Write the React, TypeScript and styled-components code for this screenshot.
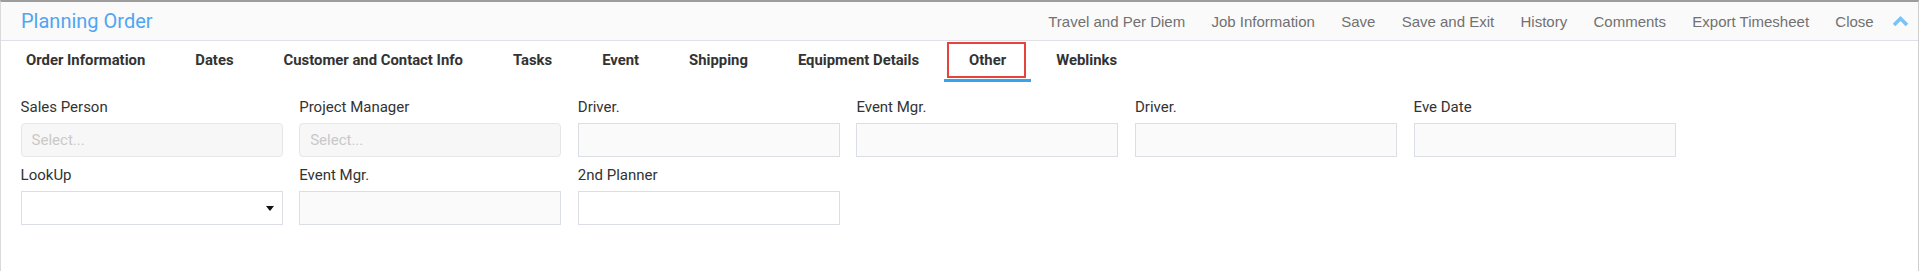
import * as React from "react";
import styled, { createGlobalStyle } from "styled-components";

const GlobalStyle = createGlobalStyle`
  html, body {
    margin: 0;
    padding: 0;
    background: #fff;
  }
  body {
    font-family: Roboto, "Liberation Sans", Arial, sans-serif;
  }
`;

const Panel = styled.div`
  box-sizing: border-box;
  width: 1919px;
  height: 271px;
  border-top: 2px solid #9d9d9d;
  border-left: 1px solid #dadada;
  border-right: 1px solid #cfcfcf;
  background: #fff;
`;

const Header = styled.div`
  display: flex;
  align-items: center;
  height: 38px;
  padding: 0 9px 0 20px;
  background: #fafafa;
  border-bottom: 1px solid #dfe1e8;
`;

const Title = styled.div`
  flex: 1;
  font-family: Roboto, sans-serif;
  font-size: 20px;
  color: #4fa6f2;
`;

const Actions = styled.div`
  display: flex;
  align-items: center;
  gap: 26.3px;
`;

const Action = styled.span`
  font-family: "Liberation Sans", Arial, sans-serif;
  font-size: 15px;
  color: #717171;
  cursor: pointer;
`;

const Collapse = styled.span`
  display: flex;
  margin-left: -8px;
  width: 17px;
  height: 12px;
`;

const TabBar = styled.div`
  display: flex;
  height: 41px;
`;

interface TabProps {
  active?: boolean;
}

const Tab = styled.div<TabProps>`
  position: relative;
  box-sizing: border-box;
  height: 41px;
  padding: 0 25px;
  line-height: 38px;
  font-family: Roboto, sans-serif;
  font-size: 14.85px;
  font-weight: 700;
  color: #333;
  border-bottom: 3px solid ${({ active }) => (active ? "#3aa2ec" : "transparent")};
  ${({ active }) =>
    active
      ? `&::after {
    content: "";
    position: absolute;
    top: 1px;
    bottom: 1px;
    left: 3px;
    right: 5px;
    border: 2px solid #e5443c;
  }`
      : ""}
`;

const Form = styled.div`
  display: grid;
  grid-template-columns: repeat(6, 262px);
  column-gap: 16.6px;
  row-gap: 8.5px;
  padding: 15px 0 0 19.6px;
`;

const Field = styled.div`
  display: flex;
  flex-direction: column;
`;

const Label = styled.div`
  font-family: Roboto, sans-serif;
  font-size: 15px;
  line-height: 20px;
  color: #333;
  margin-bottom: 5.5px;
`;

type BoxKind = "select" | "disabled" | "plain" | "dropdown";

interface BoxProps {
  kind: BoxKind;
}

const Box = styled.div<BoxProps>`
  position: relative;
  box-sizing: border-box;
  height: 34px;
  display: flex;
  align-items: center;
  padding: 0 10px;
  border: 1px solid ${({ kind }) => (kind === "select" ? "#e6e6e6" : "#dcdee5")};
  border-radius: ${({ kind }) => (kind === "select" ? "4px" : "0")};
  background: ${({ kind }) =>
    kind === "select" ? "#f7f7f7" : kind === "disabled" ? "#fafafa" : "#fff"};
  font-family: Roboto, sans-serif;
  font-size: 15px;
  color: #c9c9c9;
`;

const Caret = styled.span`
  position: absolute;
  right: 8px;
  top: 14px;
  width: 0;
  height: 0;
  border-left: 4.5px solid transparent;
  border-right: 4.5px solid transparent;
  border-top: 5.5px solid #111;
`;

const tabs = [
  "Order Information",
  "Dates",
  "Customer and Contact Info",
  "Tasks",
  "Event",
  "Shipping",
  "Equipment Details",
  "Other",
  "Weblinks",
];

const actions = [
  "Travel and Per Diem",
  "Job Information",
  "Save",
  "Save and Exit",
  "History",
  "Comments",
  "Export Timesheet",
  "Close",
];

interface FieldDef {
  label: string;
  kind: BoxKind;
  placeholder?: string;
}

const row1: FieldDef[] = [
  { label: "Sales Person", kind: "select", placeholder: "Select..." },
  { label: "Project Manager", kind: "select", placeholder: "Select..." },
  { label: "Driver.", kind: "disabled" },
  { label: "Event Mgr.", kind: "disabled" },
  { label: "Driver.", kind: "disabled" },
  { label: "Eve Date", kind: "disabled" },
];

const row2: FieldDef[] = [
  { label: "LookUp", kind: "dropdown" },
  { label: "Event Mgr.", kind: "disabled" },
  { label: "2nd Planner", kind: "plain" },
];

const FormField: React.FunctionComponent<FieldDef> = ({ label, kind, placeholder }) => (
  <Field>
    <Label>{label}</Label>
    <Box kind={kind}>
      {placeholder}
      {kind === "dropdown" && <Caret />}
    </Box>
  </Field>
);

export default function App() {
  return (
    <>
      <GlobalStyle />
      <Panel>
        <Header>
          <Title>Planning Order</Title>
          <Actions>
            {actions.map((a) => (
              <Action key={a}>{a}</Action>
            ))}
            <Collapse>
              <svg width="17" height="12" viewBox="0 0 17 12">
                <polyline
                  points="2,10 8.5,3.5 15,10"
                  fill="none"
                  stroke="#7cc2f4"
                  strokeWidth="3.6"
                  strokeLinecap="butt"
                />
              </svg>
            </Collapse>
          </Actions>
        </Header>
        <TabBar>
          {tabs.map((t) => (
            <Tab key={t} active={t === "Other"}>
              {t}
            </Tab>
          ))}
        </TabBar>
        <Form>
          {row1.map((f, i) => (
            <FormField key={"a" + i} {...f} />
          ))}
          {row2.map((f, i) => (
            <FormField key={"b" + i} {...f} />
          ))}
        </Form>
      </Panel>
    </>
  );
}
